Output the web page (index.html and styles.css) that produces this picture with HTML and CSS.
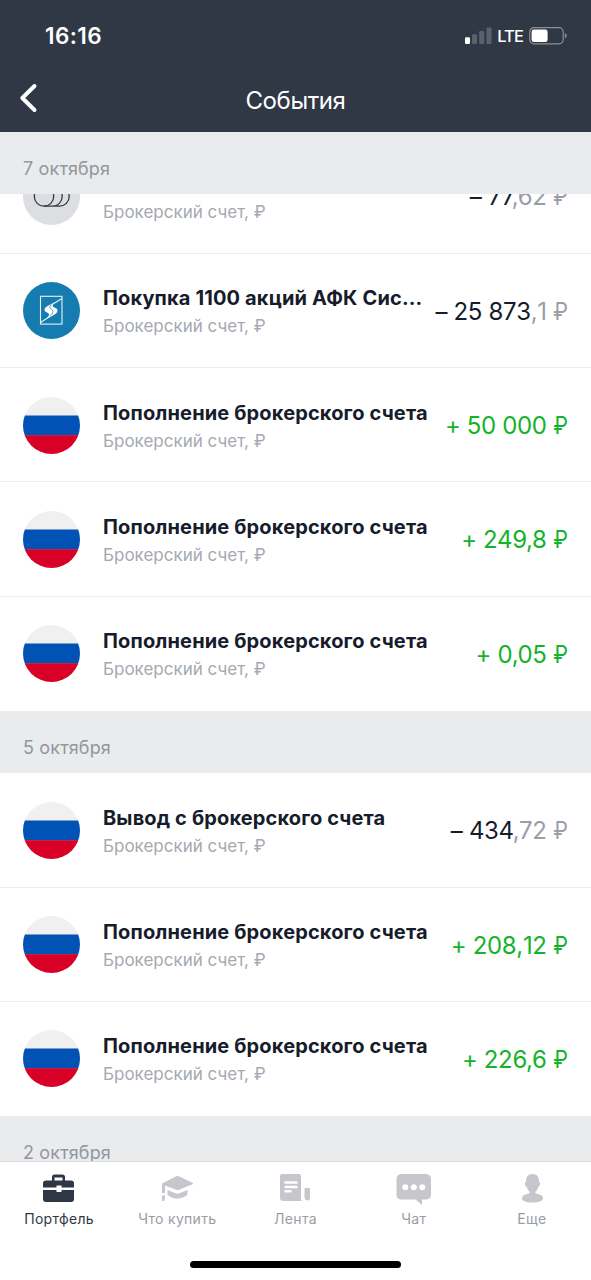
FILE: index.html
```html
<!DOCTYPE html>
<html lang="ru">
<head>
<meta charset="utf-8">
<title>События</title>
<link rel="stylesheet" href="styles.css">
</head>
<body>
<svg class="defs" width="0" height="0" aria-hidden="true">
  <symbol id="flag" viewBox="0 0 57 57">
    <clipPath id="disc"><circle cx="28.5" cy="28.5" r="28.5"/></clipPath>
    <g clip-path="url(#disc)">
      <rect width="57" height="19" fill="#f0f0f0"/>
      <rect y="18.5" width="57" height="20" fill="#0052b4"/>
      <rect y="38.2" width="57" height="19" fill="#d80027"/>
    </g>
  </symbol>
</svg>
<div class="screen">
  <header class="header">
    <div class="status">
      <span class="clock">16:16</span>
      <div class="indicators">
        <svg width="27" height="18" viewBox="0 0 27 18">
          <rect x="0" y="10.3" width="5" height="6.7" rx="1.2" fill="#fff"/>
          <g fill="#5a606c"><rect x="7" y="7.3" width="5" height="9.7" rx="1.2"/><rect x="14.2" y="4" width="5" height="13" rx="1.2"/><rect x="21.5" y="0.5" width="5" height="16.5" rx="1.2"/></g>
        </svg>
        <span class="network">LTE</span>
        <svg class="battery" width="39" height="18" viewBox="0 0 39 18">
          <rect x="0.7" y="0.7" width="33.5" height="16.2" rx="4.3" fill="none" stroke="#8b8f97" stroke-width="1.2"/>
          <rect x="2.6" y="2.6" width="16" height="12.4" rx="2.3" fill="#fff"/>
          <path d="M35.8 6Q37.8 7 37.8 8.8T35.8 11.6Z" fill="#8b8f97"/>
        </svg>
      </div>
    </div>
    <div class="navbar">
      <svg class="back" width="20" height="32" viewBox="0 0 20 32"><path d="M15.5 4 3.3 16 15.5 28" fill="none" stroke="#fff" stroke-width="4" stroke-linecap="round" stroke-linejoin="round"/></svg>
      <h1 class="title">События</h1>
    </div>
  </header>

  <main class="feed">
    <h2 class="date">7 октября</h2>
    <div class="scrolled">
      <div class="row">
        <svg class="avatar" viewBox="0 0 57 57"><circle cx="28.5" cy="28.5" r="28.5" fill="#dddee1"/><g fill="none" stroke="#333b48" stroke-width="1.3"><circle cx="21" cy="28.5" r="9.7"/><path d="M21 38.200h8.500a9.700 9.700 0 0 0 0-19.400M29 38.200h7.500a9.700 9.700 0 0 0 0-19.400"/></g></svg>
        <div class="info"><div class="account">Брокерский счет, ₽</div></div>
        <div class="amount">– 77<span class="minor">,62 <span class="rub">₽</span></span></div>
      </div>
    </div>
    <div class="row">
      <svg class="avatar" viewBox="0 0 57 57"><circle cx="28.5" cy="28.5" r="28.5" fill="#167caf"/><g fill="none" stroke="#e4f3f9" stroke-width="1.1"><rect x="17.5" y="14.3" width="21.5" height="27.800"/><path d="M17.500 40.500 27.500 34M39 16.500 29 22.500"/></g><path d="M32 20.500C26 23 21.500 25 21.500 27.800c0 2.700 4.500 2.700 4.500 4.700 0 1.500-1 2.500-2.500 4 5-2 11-4.500 11-8 0-3-4.800-2.500-4.800-4.700 0-1.300 1-2.300 2.300-3.300Z" fill="#fff"/><path d="M28.500 22.500c-4.500 4.500 1.700 4 1.500 7 0 2-1.500 3.500-3 4.700" fill="none" stroke="#167caf" stroke-width=".7"/></svg>
      <div class="info"><div class="name">Покупка 1100 акций АФК Сис...</div><div class="account">Брокерский счет, ₽</div></div>
      <div class="amount unkerned">– 25 873<span class="minor">,1 <span class="rub">₽</span></span></div>
    </div>
    <div class="row">
      <svg class="avatar"><use href="#flag"/></svg>
      <div class="info"><div class="name">Пополнение брокерского счета</div><div class="account">Брокерский счет, ₽</div></div>
      <div class="amount income">+ 50 000 <span class="rub">₽</span></div>
    </div>
    <div class="row">
      <svg class="avatar"><use href="#flag"/></svg>
      <div class="info"><div class="name">Пополнение брокерского счета</div><div class="account">Брокерский счет, ₽</div></div>
      <div class="amount income">+ 249,8 <span class="rub">₽</span></div>
    </div>
    <div class="row last">
      <svg class="avatar"><use href="#flag"/></svg>
      <div class="info"><div class="name">Пополнение брокерского счета</div><div class="account">Брокерский счет, ₽</div></div>
      <div class="amount income">+ 0,05 <span class="rub">₽</span></div>
    </div>

    <h2 class="date">5 октября</h2>
    <div class="row">
      <svg class="avatar"><use href="#flag"/></svg>
      <div class="info"><div class="name">Вывод с брокерского счета</div><div class="account">Брокерский счет, ₽</div></div>
      <div class="amount">– 434<span class="minor">,72 <span class="rub">₽</span></span></div>
    </div>
    <div class="row">
      <svg class="avatar"><use href="#flag"/></svg>
      <div class="info"><div class="name">Пополнение брокерского счета</div><div class="account">Брокерский счет, ₽</div></div>
      <div class="amount income unkerned">+ 208,12 <span class="rub">₽</span></div>
    </div>
    <div class="row last">
      <svg class="avatar"><use href="#flag"/></svg>
      <div class="info"><div class="name">Пополнение брокерского счета</div><div class="account">Брокерский счет, ₽</div></div>
      <div class="amount income">+ 226,6 <span class="rub">₽</span></div>
    </div>

    <h2 class="date">2 октября</h2>
  </main>

  <footer class="bottom">
    <nav class="tabs">
      <a class="tab active">
        <svg width="36" height="34" viewBox="0 0 36 34"><path fill="#2f3746" fill-rule="evenodd" d="M11 7.500V4Q11 1.500 13.500 1.500h8Q24 1.500 24 4V7.500h6Q33 7.500 33 10.500v4H20.500V12.500h-5v2H2V10.500Q2 7.500 5 7.500ZM13.500 7.500h8V4.500h-8ZM2 17h13.500v2h5v-2H33v9q0 3-3 3H5q-3 0-3-3Z"/></svg>
        <span>Портфель</span>
      </a>
      <a class="tab">
        <svg width="36" height="34" viewBox="0 0 36 34"><g fill="#c6c7cc"><path d="M3 10.500 17.300 3.300q1.200-.6 2.400 0L33.500 9.800q1.200.7 0 1.400L20 16.800q-1.500.6-3 0L6 12.500V20H3ZM3 22.500h3V26l-1 2H3ZM8.500 17l8 3.300q2 .8 4 0L28.500 17v4.500C26 24 22 25.500 18.500 25.500S10.500 24 8.500 21.500Z"/></g></svg>
        <span>Что купить</span>
      </a>
      <a class="tab">
        <svg width="36" height="34" viewBox="0 0 36 34"><path fill="#c6c7cc" d="M5 1h17q2 0 2 2V26q0 1.500 1.500 2H6.500Q3 28 3 25V3q0-2 2-2ZM28 15h4q1 0 1 1v8.500q0 3-2.500 3T27.500 24.500V15.500Z"/><path d="M8.500 9.500h11M8.500 14h11M8.500 18.300h5" stroke="#fff" stroke-width="2.500" stroke-linecap="round"/></svg>
        <span>Лента</span>
      </a>
      <a class="tab">
        <svg width="36" height="34" viewBox="0 0 36 34"><path fill="#c6c7cc" d="M5.500 1h24Q35 1 35 6.500v15q0 5-5.500 5H26V32l-6.500-5.500h-14q-5 0-5-5v-15Q.5 1 5.500 1Z"/><g fill="#fff"><circle cx="9.300" cy="14.200" r="3"/><circle cx="17.800" cy="14.200" r="3"/><circle cx="26.300" cy="14.200" r="3"/></g></svg>
        <span>Чат</span>
      </a>
      <a class="tab">
        <svg width="36" height="34" viewBox="0 0 36 34"><path fill="#c6c7cc" d="M18.500 1c5 0 6.500 3.500 6.500 8q1.500 0 1 2.500c-.7 2-1 2.500-2 3-.5 2-1.500 3.500-3 4.500.5 1.500 2.500 2 4.500 2.500 2 .6 3.500 1.700 3.500 4 0 2.500-5 4-10.500 4S8 28 8 25.500c0-2.300 1.500-3.400 3.500-4 2-.5 4-1 4.500-2.500-1.500-1-2.500-2.500-3-4.500-1-.5-1.300-1-2-3Q10.500 9 12 9c0-4.500 1.500-8 6.500-8Z"/></svg>
        <span>Еще</span>
      </a>
    </nav>
    <div class="home-indicator"></div>
  </footer>
</div>
</body>
</html>
```
FILE: styles.css
```css
* { box-sizing: border-box; }

body {
  margin: 0;
  font-family: Inter, "Noto Sans", sans-serif;
  background: #fff;
}

.defs { position: absolute; }

.screen {
  display: flex;
  flex-direction: column;
  width: 591px;
  height: 1280px;
  overflow: hidden;
}

.header {
  flex: none;
  height: 131.5px;
  background: #303745;
  color: #fff;
}

.status {
  display: flex;
  justify-content: space-between;
  align-items: center;
  height: 71px;
  padding: 0 23px 0 45px;
}

.clock {
  font-size: 22.5px;
  font-weight: 600;
  letter-spacing: 0.4px;
}

.indicators { display: flex; align-items: center; }

.network {
  margin: 0 6px 0 5px;
  font-size: 16.5px;
  font-weight: 500;
  line-height: 18px;
  letter-spacing: -0.9px;
}

.navbar {
  display: grid;
  grid-template-columns: 60px 1fr 60px;
  align-items: center;
  height: 60px;
}

.back { margin: -7px 0 0 19px; }

.title {
  margin: 0;
  text-align: center;
  font-size: 24px;
  font-weight: 400;
  line-height: 60px;
  letter-spacing: -0.4px;
}

.feed {
  flex: 1;
  min-height: 0;
  overflow: hidden;
}

.date {
  height: 62.4px;
  margin: 0;
  padding: 25px 23px 0;
  background: #eaebed;
  color: #9297a0;
  font-size: 18px;
  font-weight: 400;
  line-height: 24px;
  letter-spacing: 0.15px;
}

.scrolled {
  display: flex;
  flex-direction: column;
  justify-content: flex-end;
  height: 60px;
  overflow: hidden;
}

.scrolled .info { padding-top: 31px; }

.row {
  flex: none;
  display: flex;
  align-items: center;
  height: 114.3px;
  padding: 0.5px 23px 0;
  border-bottom: 1px solid #ededef;
}

.row.last { border-bottom-color: transparent; }

.avatar {
  flex: none;
  width: 57px;
  height: 57px;
  margin-right: 23px;
}

.info { flex: 1; min-width: 0; white-space: nowrap; padding-top: 3px; }

.name {
  color: #161c2b;
  font-size: 20px;
  font-weight: 700;
  line-height: 28px;
  letter-spacing: 0.14px;
}

.account {
  color: #a5a9b1;
  font-size: 17px;
  line-height: 28px;
}

.amount {
  flex: none;
  padding: 2px 0.5px 0 0;
  color: #161c2b;
  font-size: 24px;
  line-height: 30px;
  letter-spacing: -0.35px;
  white-space: nowrap;
}

.amount.unkerned { font-kerning: none; }

.rub {
  display: inline-block;
  transform: scaleX(0.87);
  transform-origin: right;
  margin-left: -2px;
}

.minor { color: #9a9ea7; }
.income { color: #13b32b; }

.bottom {
  flex: none;
  height: 119.5px;
  border-top: 1px solid #dcdde0;
  background: #fff;
}

.tabs {
  display: grid;
  grid-template-columns: repeat(5, 1fr);
  height: 99px;
  padding-top: 11px;
}

.tab {
  display: flex;
  flex-direction: column;
  align-items: center;
  color: #999da5;
  font-size: 14px;
  line-height: 20px;
  letter-spacing: 0.3px;
  gap: 2.5px;
}

.tab.active { color: #303745; }

.home-indicator {
  width: 211px;
  height: 7px;
  margin: 0.5px auto 0;
  border-radius: 4px;
  background: #000;
}
```
